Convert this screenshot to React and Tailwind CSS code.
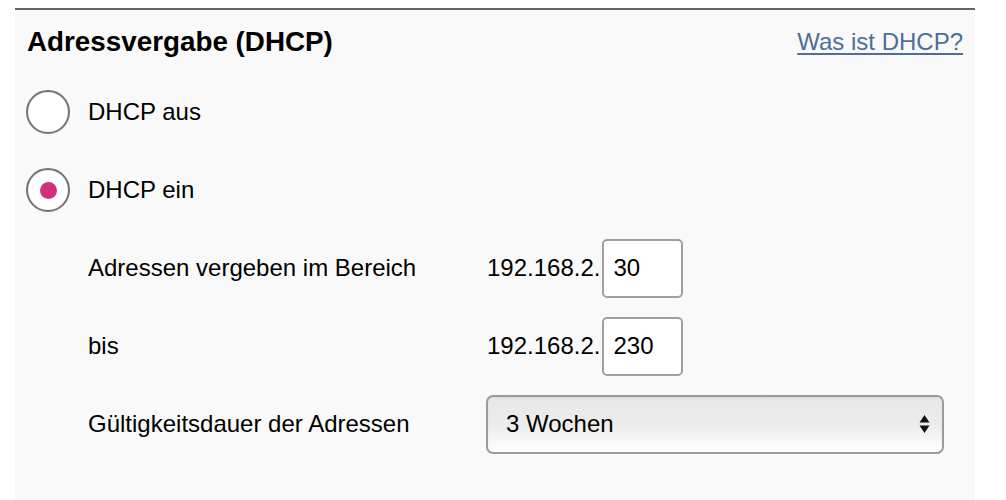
import React, { useState } from 'react';

const Radio = ({ checked, label, onClick }) => (
  <div className="flex items-center h-[78px] cursor-pointer" onClick={onClick}>
    <div className="w-[44px] h-[44px] rounded-full bg-white border-2 border-[#747474] flex items-center justify-center shadow-[inset_0_0_1px_rgba(0,0,0,0.3)]">
      {checked && <div className="w-[17px] h-[17px] rounded-full bg-[#d0307b]"></div>}
    </div>
    <span className="ml-[18px] text-[24px] text-black">{label}</span>
  </div>
);

const IpField = ({ value }) => (
  <div className="flex items-center">
    <span className="text-[24px] text-black">192.168.2.</span>
    <input
      defaultValue={value}
      className="ml-[2px] w-[81px] h-[59px] bg-white border-2 border-[#a0a0a0] rounded-[5px] px-[9px] text-[24px] text-black outline-none"
      style={{ fontFamily: 'inherit' }}
    />
  </div>
);

export default function App() {
  const [dhcp, setDhcp] = useState(true);

  return (
    <div className="w-[1006px] h-[500px] bg-white pt-[8px] px-[15px] overflow-hidden" style={{ fontFamily: '"Liberation Sans", Arial, sans-serif' }}>
      <div className="w-[960px] h-[492px] bg-[#f9f9f9] border-t-2 border-[#666666]">
        {/* Header */}
        <div className="flex items-center justify-between h-[63px] pl-[12px] pr-[12px]">
          <h1 className="text-[27.8px] font-bold text-black">Adressvergabe (DHCP)</h1>
          <a href="#" className="text-[24px] text-[#4b6f99] underline underline-offset-[3px]">Was ist DHCP?</a>
        </div>

        {/* Radios */}
        <div className="pl-[11px]">
          <Radio checked={!dhcp} label="DHCP aus" onClick={() => setDhcp(false)} />
          <Radio checked={dhcp} label="DHCP ein" onClick={() => setDhcp(true)} />
        </div>

        {/* Settings */}
        <div className="grid grid-cols-[399px_1fr] pl-[73px] items-center">
          <div className="h-[78px] flex items-center text-[24px] text-black">Adressen vergeben im Bereich</div>
          <div className="h-[78px] flex items-center"><IpField value="30" /></div>

          <div className="h-[78px] flex items-center text-[24px] text-black">bis</div>
          <div className="h-[78px] flex items-center"><IpField value="230" /></div>

          <div className="h-[78px] flex items-center text-[24px] text-black">Gültigkeitsdauer der Adressen</div>
          <div className="h-[78px] flex items-center">
            <div className="relative w-[458px] h-[59px] -ml-[1px] rounded-[7px] border-2 border-[#9c9c9c] bg-gradient-to-b from-[#e8e8e8] via-[#ececec] to-white flex items-center pl-[18px] shadow-[inset_0_1px_2px_rgba(0,0,0,0.08)]">
              <span className="text-[24px] text-black">3 Wochen</span>
              <svg className="absolute right-[12px] top-1/2 -translate-y-1/2" width="11" height="20" viewBox="0 0 11 20">
                <polygon points="5.5,1 10.5,8.5 0.5,8.5" fill="#111" />
                <polygon points="5.5,19 10.5,11.5 0.5,11.5" fill="#111" />
              </svg>
            </div>
          </div>
        </div>
      </div>
    </div>
  );
}
